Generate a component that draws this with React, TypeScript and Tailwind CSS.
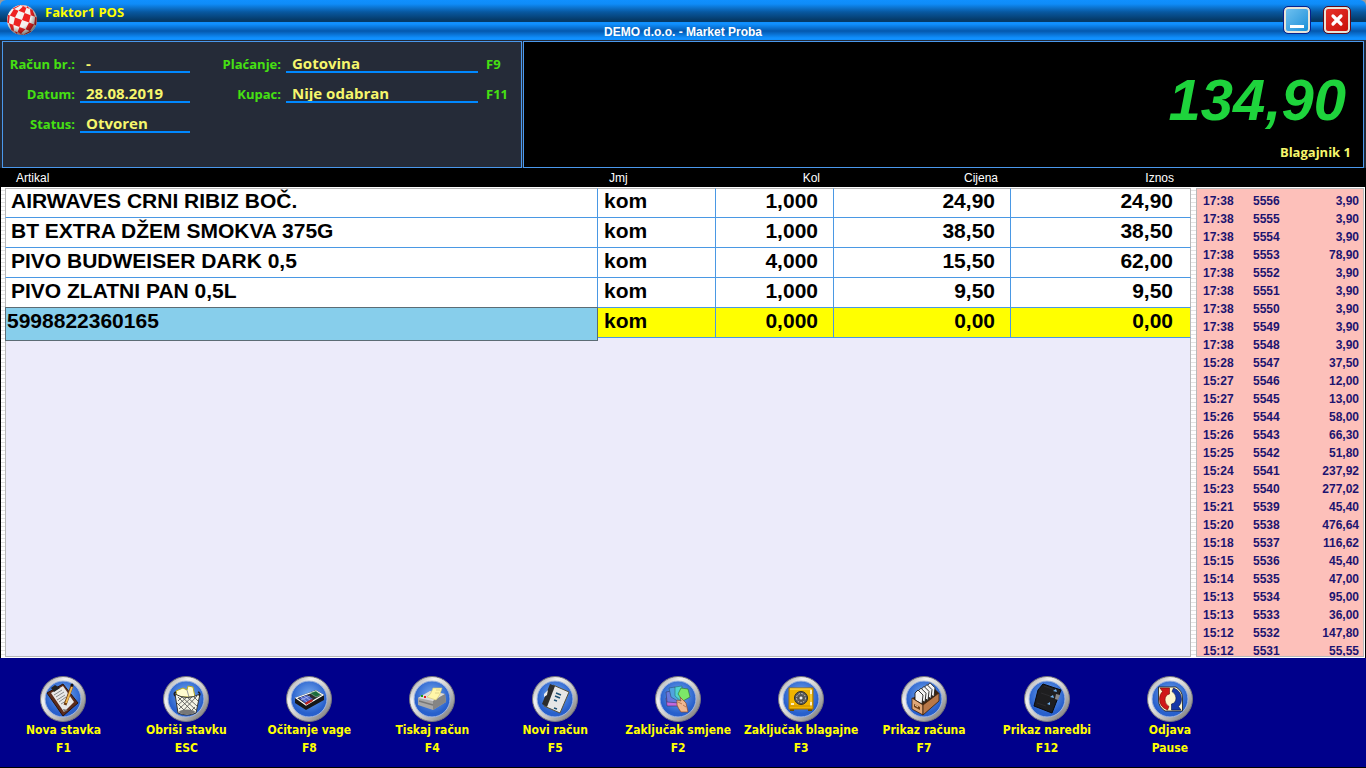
import { useId, useState } from 'react';
import type { ReactNode } from 'react';

/* ── Data ── */
interface Item {
  name: string;
  unit: string;
  qty: string;
  price: string;
  total: string;
}

const items: Item[] = [
  { name: 'AIRWAVES CRNI RIBIZ BOČ.', unit: 'kom', qty: '1,000', price: '24,90', total: '24,90' },
  { name: 'BT EXTRA DŽEM SMOKVA 375G', unit: 'kom', qty: '1,000', price: '38,50', total: '38,50' },
  { name: 'PIVO BUDWEISER DARK 0,5', unit: 'kom', qty: '4,000', price: '15,50', total: '62,00' },
  { name: 'PIVO ZLATNI PAN 0,5L', unit: 'kom', qty: '1,000', price: '9,50', total: '9,50' },
];

const receipts: [string, string, string][] = [
  ['17:38', '5556', '3,90'],
  ['17:38', '5555', '3,90'],
  ['17:38', '5554', '3,90'],
  ['17:38', '5553', '78,90'],
  ['17:38', '5552', '3,90'],
  ['17:38', '5551', '3,90'],
  ['17:38', '5550', '3,90'],
  ['17:38', '5549', '3,90'],
  ['17:38', '5548', '3,90'],
  ['15:28', '5547', '37,50'],
  ['15:27', '5546', '12,00'],
  ['15:27', '5545', '13,00'],
  ['15:26', '5544', '58,00'],
  ['15:26', '5543', '66,30'],
  ['15:25', '5542', '51,80'],
  ['15:24', '5541', '237,92'],
  ['15:23', '5540', '277,02'],
  ['15:21', '5539', '45,40'],
  ['15:20', '5538', '476,64'],
  ['15:18', '5537', '116,62'],
  ['15:15', '5536', '45,40'],
  ['15:14', '5535', '47,00'],
  ['15:13', '5534', '95,00'],
  ['15:13', '5533', '36,00'],
  ['15:12', '5532', '147,80'],
  ['15:12', '5531', '55,55'],
];

/* ── Icons, drawn inside the 46px round badge ── */
const clipboard = (
  <>
    <path d="M7 17 23 8 38 27 23 40Z" fill="#5c2c1c" stroke="#2a120a" />
    <path d="M11 17 23 10 34 26 24 36Z" fill="#e8e8e8" />
    <path d="M14 19l8-5M16 21l8-5M17 24l8-5M19 26l7-5M21 28l5-3" stroke="#8a8a8a" />
    <path d="M11 12l4-3 5 3-6 4z" fill="#222" />
    <path d="M32 10 25 29" stroke="#6b3a10" strokeWidth="3" />
    <path d="M32 11 26 27" stroke="#f0b850" strokeWidth="2" />
    <path d="M23 33l5 1-4 2z" fill="#777" />
    <circle cx="32" cy="9" r="1.5" fill="#111" />
  </>
);

const basket = (
  <>
    <path d="M13 15 20 12 24 14 25 10 30 11 32 21H14Z" fill="#fffbd0" stroke="#b8a820" />
    <path d="M24 14l2 7" stroke="#999" />
    <path d="M12 18q12 7 25 0L33 37q-9 4-18 0Z" fill="#f4f4e6" stroke="#333" />
    <path d="M15 21l16 16M19 21l14 13M24 21l10 9M30 20l5 5M34 20 18 37M29 21 16 33M24 21 15 29M19 21l-4 4M32 31l-7 7M14 27l11 11" stroke="#4a4a4a" strokeWidth=".8" />
    <ellipse cx="24" cy="36" rx="8" ry="2.5" fill="#777" />
    <path d="M12 20q-2-3 1-4M36 20q2-3-1-4" fill="none" stroke="#222" strokeWidth="1.5" />
  </>
);

const calculator = (
  <>
    <path d="M9 22 30 14 38 19V24L20 34 9 27Z" fill="#161616" />
    <path d="M10 22 30 15 37 19 20 29Z" fill="#2c2c2c" stroke="#fff" strokeWidth="1.2" />
    <path d="M24 17l6-2 5 4-5 2z" fill="#1c6b3c" stroke="#a8d8b8" strokeWidth=".5" />
    <path d="M13 22l8-3 6 4-8 4z" fill="#4c62c8" />
    <path d="M15 21l6 5M18 20l6 4M15 24l9-4" stroke="#b8c4f4" strokeWidth=".7" />
    <path d="M19 27l7-4 1 2-7 4z" fill="#c02020" />
  </>
);

const printer = (
  <>
    <path d="M9 22 21 15 36 18 37 26 24 34 9 29Z" fill="#a8a8a8" />
    <path d="M9 22 21 15 36 18 24 25Z" fill="#dcdcdc" />
    <path d="M24 25 36 18 37 26 24 34Z" fill="#858585" />
    <path d="M10 25 24 29" stroke="#777" strokeWidth="1.5" />
    <path d="M18 21Q22 19 24 12L33 12Q31 20 27 24Z" fill="#fff6a8" stroke="#d4c870" strokeWidth=".6" />
    <path d="M27 14h4M26 17h4" stroke="#d8cc80" strokeWidth=".8" />
    <path d="M12 20h2" stroke="#18a018" strokeWidth="2" />
    <path d="M15 21h2" stroke="#e02020" strokeWidth="2" />
  </>
);

const notebook = (
  <>
    <path d="M21 9 37 16 28 37 12 30Z" fill="#e6e6e6" stroke="#55503a" />
    <path d="M18 8 23 10 15 31 10 28Z" fill="#2c2c2c" />
    <path d="M12 18l4-4-1 5-3 2z" fill="#eee" />
    <path d="M24 17l5 2M23 20l5 2M22 24l3 1M22 32l3 1" stroke="#1c5074" strokeWidth="1.5" />
  </>
);

const cards = (
  <>
    <path d="M11 22 23 23 26 30 12 30Z" fill="#c468dc" stroke="#403058" strokeWidth=".6" />
    <path d="M11 16 16 15 25 27 12 26Z" fill="#6878dc" stroke="#303868" strokeWidth=".6" />
    <path d="M14 12 20 11 26 27 16 21Z" fill="#50a4e0" stroke="#285078" strokeWidth=".6" />
    <path d="M20 11 27 10 27 26 20 20Z" fill="#50d4d0" stroke="#287070" strokeWidth=".6" />
    <path d="M26 12 33 13 35 21 28 25 23 18Z" fill="#7ce868" stroke="#2c6828" strokeWidth=".6" />
    <path d="M22 24 26 25 25 21 28 24 31 27 33 36H26Q23 32 22 29Z" fill="#f0b890" stroke="#8c4c2c" strokeWidth=".7" />
    <path d="M23 26l4 2M28 29l3 2" stroke="#a8603c" strokeWidth=".7" />
  </>
);

const safe = (
  <>
    <path d="M12 33h4v2h-4zM30 33h4v2h-4z" fill="#6b4a00" />
    <rect x="11" y="12" width="24" height="21" fill="#f0b400" stroke="#a87400" />
    <path d="M12 13h21v18" fill="none" stroke="#ffe060" />
    <path d="M33 14v4M33 26v4M13 28h3" stroke="#fff" strokeWidth="1.5" />
    <path d="M12 30h22" stroke="#c88c00" />
    <circle cx="23" cy="22" r="6.5" fill="#5a5a5a" stroke="#2c2c2c" />
    <circle cx="23" cy="22" r="4.5" fill="none" stroke="#ccc" strokeDasharray="1.5 1.5" />
    <circle cx="23" cy="22" r="2" fill="#eee" stroke="#333" strokeWidth=".7" />
  </>
);

const fileBox = (
  <>
    <path d="M11 22 34 13 38 17 22 30Z" fill="#3c2410" />
    {[12, 9, 6, 3, 0].map((n) => (
      <path key={n} d={`M${14 + n} ${17 - n * 0.6}l3-3 5 5-1 9-7-4z`} fill="#f4f4f4" stroke="#1c1c1c" strokeWidth=".9" />
    ))}
    <path d="M11 22 22 29V39L11 33Z" fill="#e0a878" stroke="#3c2008" strokeWidth=".8" />
    <path d="M22 29 38 17V25L22 39Z" fill="#b87848" stroke="#3c2008" strokeWidth=".8" />
    <path d="M13 28l6 3v3l-6-3z" fill="#704018" />
    <path d="M14 29l3 2" stroke="#f0d0a8" />
  </>
);

const ledger = (
  <>
    <path d="M19 8 37 14 28 37 10 30 14 14Z" fill="#1e1e20" stroke="#08080a" />
    <path d="M20 10l11 4M17 17l9 3M13 27l9 3" stroke="#2e2e32" strokeWidth=".8" />
    <path d="M32 18l4 1-2 5-3-1z" fill="#888" />
    <path d="M29 15l3-2 1 3zM26 21l3-2 1 3zM23 28l3-2v3z" fill="#70b0ec" />
  </>
);

const swapArrow = 'M13 12H22.5V18Q18 19 18 24Q18 28 22 30.5L20.5 34Q12.5 31 12.5 23Q12.5 18 15.5 15.5Z';

const swap = (
  <>
    <path d="M11.5 11H29Q35.5 15 35.5 22V35H18Q11.5 31 11.5 24Z" fill="#fff6cc" stroke="#181818" strokeWidth=".8" />
    <path d={swapArrow} fill="#d01818" stroke="#700808" strokeWidth=".6" />
    <path d={swapArrow} fill="#1838a8" stroke="#081448" strokeWidth=".6" transform="rotate(180 23.5 23)" />
  </>
);

interface Action {
  label: string;
  hotkey: string;
  icon: ReactNode;
}

const actions: Action[] = [
  { label: 'Nova stavka', hotkey: 'F1', icon: clipboard },
  { label: 'Obriši stavku', hotkey: 'ESC', icon: basket },
  { label: 'Očitanje vage', hotkey: 'F8', icon: calculator },
  { label: 'Tiskaj račun', hotkey: 'F4', icon: printer },
  { label: 'Novi račun', hotkey: 'F5', icon: notebook },
  { label: 'Zaključak smjene', hotkey: 'F2', icon: cards },
  { label: 'Zaključak blagajne', hotkey: 'F3', icon: safe },
  { label: 'Prikaz računa', hotkey: 'F7', icon: fileBox },
  { label: 'Prikaz naredbi', hotkey: 'F12', icon: ledger },
  { label: 'Odjava', hotkey: 'Pause', icon: swap },
];

function Badge({ children }: { children: ReactNode }) {
  const id = useId();
  return (
    <svg viewBox="0 0 46 46" className="-mb-px size-[46px]" aria-hidden="true">
      <defs>
        <linearGradient id={`${id}r`} x1="0" y1="0" x2="1" y2="1">
          <stop offset="0" stopColor="#8c8c90" />
          <stop offset=".3" stopColor="#f2f2f2" />
          <stop offset=".6" stopColor="#c4c4c4" />
          <stop offset="1" stopColor="#6c6c6c" />
        </linearGradient>
        <radialGradient id={`${id}b`} cx=".5" cy=".4">
          <stop offset="0" stopColor="#78acf0" />
          <stop offset="1" stopColor="#2860cc" />
        </radialGradient>
      </defs>
      <circle cx="23" cy="23" r="22.5" fill={`url(#${id}r)`} stroke="#77777c" />
      <circle cx="23" cy="23" r="18" fill={`url(#${id}b)`} stroke="#a4b8e0" />
      {children}
    </svg>
  );
}

/* Red cells of a checkered ball, leaning to the right */
function ballCells(): string {
  const step = Math.PI / 6;
  const tilt = 0.35;
  const point = (lon: number, lat: number) => {
    const x = Math.cos(lat) * Math.sin(lon) * 15;
    const y = -Math.sin(lat) * 15;
    const px = 16 + x * Math.cos(tilt) - y * Math.sin(tilt);
    const py = 16 + x * Math.sin(tilt) + y * Math.cos(tilt);
    return `${px.toFixed(2)} ${py.toFixed(2)}`;
  };
  let d = '';
  for (let i = -3; i < 3; i++) {
    for (let j = -3; j < 3; j++) {
      if ((i + j) % 2 !== 0) continue;
      const [a, b, c, e] = [i * step, (i + 1) * step, j * step, (j + 1) * step];
      d += `M${point(a, c)}L${point(b, c)}L${point(b, e)}L${point(a, e)}Z`;
    }
  }
  return d;
}

function Logo() {
  return (
    <svg viewBox="0 0 32 32" className="size-8 shrink-0" aria-hidden="true">
      <defs>
        <radialGradient id="shade" cx=".4" cy=".35" r=".65">
          <stop offset=".6" stopColor="#000" stopOpacity="0" />
          <stop offset="1" stopColor="#000" stopOpacity=".5" />
        </radialGradient>
      </defs>
      <circle cx="16" cy="16" r="15" fill="#f6f2f0" />
      <path d={ballCells()} fill="#ee2222" />
      <circle cx="16" cy="16" r="15" fill="url(#shade)" />
    </svg>
  );
}

function Field({ label, value, wide }: { label: string; value: string; wide?: boolean }) {
  const id = useId();
  return (
    <div className="flex h-5 gap-[5px]">
      <label htmlFor={id} className={`pt-px text-right text-[13px] leading-5 whitespace-nowrap text-[#46e012] ${wide ? 'w-[60px]' : 'w-[66px]'}`}>
        {label}
      </label>
      <input
        id={id}
        readOnly
        defaultValue={value}
        className={`h-5 border-b-2 border-[#0088ff] bg-transparent pt-[2px] pl-[6px] text-[15px] leading-4 text-[#f6f66c] outline-none ${wide ? 'w-[192px]' : 'w-[110px]'}`}
      />
    </div>
  );
}

export default function App() {
  const [code, setCode] = useState('5998822360165');

  return (
    <div className="flex h-screen min-w-[1240px] flex-col bg-[#9a9a9a] font-['Liberation_Sans',Arial,sans-serif]">
      {/* ── Title bar ── */}
      <header className="grid h-10 shrink-0 grid-cols-[1fr_auto_1fr] rounded-t-md bg-[linear-gradient(#1090ff_0px,#0f8cf8_4px,#0858a0_12px,#053a68_20px,#053a68_22px,#1090ff_22px,#1090ff_24px,#0458ae_31px,#1090ff_38px)]">
        <div className="flex gap-[7px] pt-1 pl-[6px]">
          <Logo />
          <h1 className="font-['Open_Sans','Noto_Sans',sans-serif] text-[13px] leading-4 font-bold text-[#ffff00]">Faktor1 POS</h1>
        </div>
        <p className="self-end text-xs leading-4 font-bold text-white">DEMO d.o.o. - Market Proba</p>
        <div className="flex items-center justify-end gap-[14px] pr-4">
          <button aria-label="Minimiziraj" className="flex size-[26px] items-end justify-center rounded-[4px] border-2 border-[#e8e4d8] bg-linear-to-br from-[#6cc0f0] to-[#0c90d8] pb-[3px] outline outline-[#08208c]">
            <span className="h-[3px] w-[14px] bg-white" />
          </button>
          <button aria-label="Zatvori" className="flex size-[26px] items-center justify-center rounded-[4px] border-2 border-[#e8e4d8] bg-linear-to-br from-[#e83028] to-[#c81008] outline outline-[#600818]">
            <svg viewBox="0 0 14 14" className="size-[14px]" aria-hidden="true">
              <path d="M3 3l8 8M11 3l-8 8" stroke="#fff" strokeWidth="3.2" strokeLinecap="round" />
            </svg>
          </button>
        </div>
      </header>

      {/* ── Receipt info + total ── */}
      <section className="flex h-32 shrink-0 gap-px bg-[#232936] px-[2px] pt-px font-['Open_Sans','Noto_Sans',sans-serif] font-bold">
        <div className="flex w-[520px] gap-[31px] border border-[#4a98ec] bg-[#252b38] pt-[11px] pl-[6px]">
          <div className="flex flex-col gap-[10px]">
            <Field label="Račun br.:" value="-" />
            <Field label="Datum:" value="28.08.2019" />
            <Field label="Status:" value="Otvoren" />
          </div>
          <div className="flex flex-col gap-[10px]">
            <div className="flex h-5 gap-2 text-[13px] leading-5 text-[#46e012]">
              <Field label="Plaćanje:" value="Gotovina" wide />
              <kbd className="pt-px font-[inherit]">F9</kbd>
            </div>
            <div className="flex h-5 gap-2 text-[13px] leading-5 text-[#46e012]">
              <Field label="Kupac:" value="Nije odabran" wide />
              <kbd className="pt-px font-[inherit]">F11</kbd>
            </div>
          </div>
        </div>
        <div className="flex flex-1 flex-col items-end border border-[#4a98ec] bg-black pt-7 pr-3">
          <output className="pr-[5px] font-['Liberation_Sans',Arial,sans-serif] text-[58px] leading-[60px] text-[#1ed43c] italic">134,90</output>
          <p className="pt-3 text-[13px] leading-5 text-[#f6f66c]">Blagajnik 1</p>
        </div>
      </section>

      {/* ── Items + receipt history ── */}
      <main className="flex min-h-0 flex-1 bg-black px-px">
        <div className="mt-[19px] w-1 bg-[repeating-linear-gradient(#fff_0_3px,#e2e2e2_3px_4px)]" />
        <section className="flex flex-1 flex-col border-b border-white">
          <table className="w-full table-fixed border-separate border-spacing-0">
            <thead className="bg-black text-xs leading-[17px] text-white">
              <tr className="*:h-5 *:border-b *:border-white *:p-0 *:pt-[2px] *:font-normal">
                <th className="text-left"><span className="pl-[11px]">Artikal</span></th>
                <th className="w-[118px] text-left"><span className="pl-[11px]">Jmj</span></th>
                <th className="w-[118px] text-right"><span className="pr-[14px]">Kol</span></th>
                <th className="w-[177px] text-right"><span className="pr-[13px]">Cijena</span></th>
                <th className="w-[180px] text-right"><span className="pr-[17px]">Iznos</span></th>
              </tr>
            </thead>
            <tbody className="text-[21px] leading-6 font-bold text-black">
              {items.map((item) => (
                <tr key={item.name} className="bg-white *:h-[30px] *:border-r *:border-b *:border-[#4a98e4] *:pt-px *:pb-0 *:align-top first:*:border-t first:*:border-t-[#b8b8b8] first:*:pt-0">
                  <td className="border-l border-l-[#b8b8b8]! pl-[5px]">{item.name}</td>
                  <td className="pl-[6px]">{item.unit}</td>
                  <td className="pr-[15px] text-right">{item.qty}</td>
                  <td className="pr-[15px] text-right">{item.price}</td>
                  <td className="border-r-[#b8b8b8]! pr-[17px] text-right">{item.total}</td>
                </tr>
              ))}
              <tr className="bg-[#ffff00] *:h-[30px] *:border-r *:border-b *:border-[#4a98e4] *:pt-px *:pb-0 *:align-top">
                <td className="relative">
                  <input
                    aria-label="Artikal"
                    value={code}
                    onChange={(e) => setCode(e.target.value)}
                    className="absolute -top-px left-0 h-[34px] w-[calc(100%+1px)] border border-[#5c6c74] bg-[#87ceeb] pb-[6px] pl-px outline-none"
                  />
                </td>
                <td className="pl-[6px]">kom</td>
                <td className="pr-[15px] text-right">0,000</td>
                <td className="pr-[15px] text-right">0,00</td>
                <td className="border-r-[#b8b8b8]! pr-[17px] text-right">0,00</td>
              </tr>
            </tbody>
          </table>
          <div className="flex-1 border border-t-0 border-[#b8b8b8] bg-[#ecebfa]" />
        </section>
        <div className="mt-[19px] w-[5px] bg-[repeating-linear-gradient(#fff_0_3px,#e2e2e2_3px_4px)]" />
        <aside className="mt-[19px] flex w-[169px] border-y border-r border-white bg-white">
          <div className="flex-1 overflow-hidden border border-[#b8b8b8] bg-[#fdc0ba] pt-[3px] pr-1 pl-[6px]">
            <table className="w-full text-xs leading-[18px] font-bold text-[#1c1470]">
              <tbody>
                {receipts.map(([time, no, sum]) => (
                  <tr key={no} className="*:h-[18px] *:p-0">
                    <td className="w-[50px]">{time}</td>
                    <td>{no}</td>
                    <td className="text-right">{sum}</td>
                  </tr>
                ))}
              </tbody>
            </table>
          </div>
        </aside>
      </main>

      {/* ── Function keys ── */}
      <footer className="h-[110px] shrink-0 border-b border-black bg-[#00008b] pt-[18px]">
        <nav className="ml-[2px] grid w-9/10 grid-cols-10">
          {actions.map(({ label, hotkey, icon }) => (
            <button key={hotkey} className="flex flex-col items-center font-['DejaVu_Sans_Condensed','Noto_Sans',sans-serif] text-xs leading-[18px] font-bold whitespace-nowrap text-[#ffff00]">
              <Badge>{icon}</Badge>
              <span>{label}</span>
              <span>{hotkey}</span>
            </button>
          ))}
        </nav>
      </footer>
    </div>
  );
}
